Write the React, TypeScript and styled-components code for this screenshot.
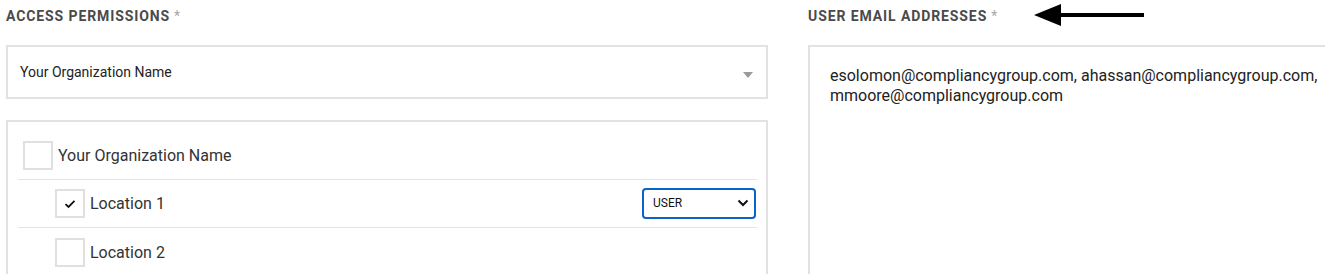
import styled, { createGlobalStyle } from 'styled-components';

const GlobalStyle = createGlobalStyle`
  body {
    margin: 0;
    overflow: hidden;
    background: #fff;
    font-family: Roboto, 'Liberation Sans', Arial, sans-serif;
  }
`;

const Page = styled.div`
  display: flex;
  gap: 40px;
  padding-left: 6px;
  width: 1400px;
`;

const Column = styled.div<{ $width: number }>`
  display: flex;
  flex-direction: column;
  width: ${(p) => p.$width}px;
  flex-shrink: 0;
`;

const HeadingRow = styled.div`
  display: flex;
  align-items: center;
  height: 31px;
  margin-bottom: 14px;
`;

const Heading = styled.h3`
  margin: 0;
  font-size: 14px;
  font-weight: 700;
  color: #4a4a4a;
  letter-spacing: 0.9px;
  text-transform: uppercase;
`;

const Required = styled.span`
  color: #a8a8a8;
  margin-left: 4px;
  font-weight: 400;
`;

const Pointer = styled.svg`
  margin-left: 36px;
`;

const SelectBox = styled.div`
  display: flex;
  align-items: center;
  justify-content: space-between;
  height: 50px;
  border: 2px solid #e2e2e2;
  padding: 0 12px;
  font-size: 14px;
  color: #222;
`;

const Caret = styled.span`
  width: 0;
  height: 0;
  margin-right: 1px;
  margin-top: 5px;
  border-left: 5px solid transparent;
  border-right: 5px solid transparent;
  border-top: 6px solid #9a9a9a;
`;

const TreeBox = styled.div`
  margin-top: 21px;
  border: 2px solid #e2e2e2;
  border-bottom: none;
  padding: 10px 9px 0 10px;
  height: 200px;
`;

const Row = styled.div<{ $indent: number; $last?: boolean }>`
  display: flex;
  align-items: center;
  height: 48px;
  padding-left: ${(p) => 5 + p.$indent}px;
  padding-right: 1px;
  border-bottom: ${(p) => (p.$last ? 'none' : '1px solid #e4e4e4')};
  box-sizing: border-box;
  font-size: 16px;
  color: #333;
`;

const Check = styled.span`
  display: inline-flex;
  align-items: center;
  justify-content: center;
  width: 26px;
  height: 25px;
  border: 2px solid #e0e0e0;
  margin-right: 5px;
  flex-shrink: 0;
`;

const Label = styled.span`
  flex: 1;
`;

const RoleSelect = styled.div`
  display: flex;
  align-items: center;
  justify-content: space-between;
  width: 114px;
  height: 31px;
  box-sizing: border-box;
  border: 2px solid #0b62cc;
  border-radius: 4px;
  padding: 0 5px 0 9px;
  font-size: 12px;
  color: #111;
  margin-top: -1px;
`;

const EmailBox = styled.div`
  height: 260px;
  border: 2px solid #e2e2e2;
  padding: 19px 20px;
  font-size: 16px;
  line-height: 20px;
  color: #222;
`;

const App = () => (
  <>
    <GlobalStyle />
    <Page>
      <Column $width={762}>
        <HeadingRow>
          <Heading>
            Access Permissions<Required>*</Required>
          </Heading>
        </HeadingRow>
        <SelectBox>
          <span>Your Organization Name</span>
          <Caret />
        </SelectBox>
        <TreeBox>
          <Row $indent={0}>
            <Check />
            <Label>Your Organization Name</Label>
          </Row>
          <Row $indent={32}>
            <Check>
              <svg width="12" height="10" viewBox="0 0 12 10">
                <path d="M1.5 5.2 L4.5 8 L10.5 1.8" fill="none" stroke="#111" strokeWidth="1.8" />
              </svg>
            </Check>
            <Label>Location 1</Label>
            <RoleSelect>
              <span>USER</span>
              <svg width="12" height="8" viewBox="0 0 12 8">
                <path d="M1.5 1.5 L6 6 L10.5 1.5" fill="none" stroke="#111" strokeWidth="2" />
              </svg>
            </RoleSelect>
          </Row>
          <Row $indent={32} $last>
            <Check />
            <Label>Location 2</Label>
          </Row>
        </TreeBox>
      </Column>
      <Column $width={540}>
        <HeadingRow>
          <Heading>
            User Email Addresses<Required>*</Required>
          </Heading>
          <Pointer width="112" height="26" viewBox="0 0 112 26">
            <polygon points="0,12 27,1 27,23" fill="#000" />
            <rect x="26" y="10" width="84" height="4" fill="#000" />
          </Pointer>
        </HeadingRow>
        <EmailBox>
          esolomon@compliancygroup.com, ahassan@compliancygroup.com, mmoore@compliancygroup.com
        </EmailBox>
      </Column>
    </Page>
  </>
);

export default App;
